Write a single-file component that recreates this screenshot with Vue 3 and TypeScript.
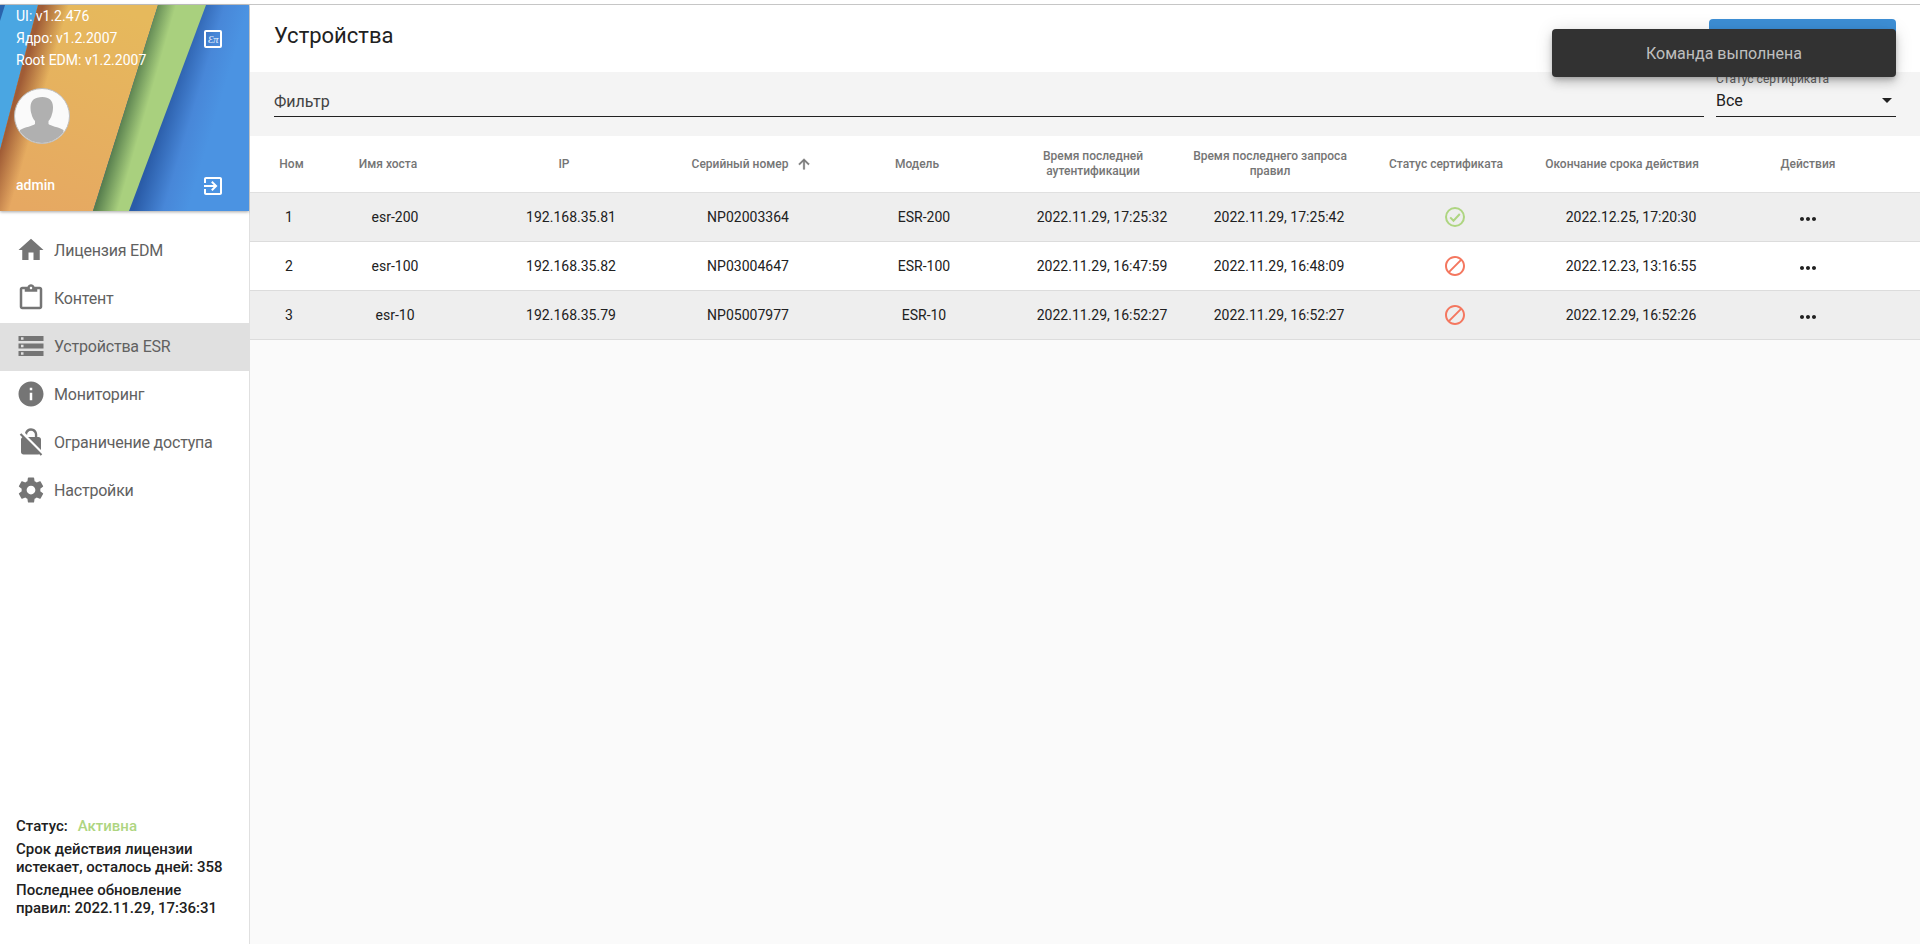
<script setup lang="ts">
interface MenuItem { label: string; path: string; active?: boolean }
interface Device { n: number; host: string; ip: string; serial: string; model: string; auth: string; rules: string; ok: boolean; end: string }

const menu: MenuItem[] = [
  { label: 'Лицензия EDM', path: 'M10 20v-6h4v6h5v-8h3L12 3 2 12h3v8z' },
  { label: 'Контент', path: 'M19 3h-4.18C14.4 1.84 13.3 1 12 1c-1.3 0-2.4.84-2.82 2H5c-1.1 0-2 .9-2 2v14c0 1.1.9 2 2 2h14c1.1 0 2-.9 2-2V5c0-1.1-.9-2-2-2zm-7 0c.55 0 1 .45 1 1s-.45 1-1 1-1-.45-1-1 .45-1 1-1zm7 16H5V5h2v2h10V5h2v14z' },
  { label: 'Устройства ESR', active: true, path: 'M2 20h20v-4H2v4zm2-3h2v2H4v-2zM2 4v4h20V4H2zm4 3H4V5h2v2zm-4 7h20v-4H2v4zm2-3h2v2H4v-2z' },
  { label: 'Мониторинг', path: 'M12 2C6.48 2 2 6.48 2 12s4.48 10 10 10 10-4.48 10-10S17.52 2 12 2zm1 15h-2v-6h2v6zm0-8h-2V7h2v2z' },
  { label: 'Ограничение доступа', path: 'M21 21.78L4.22 5 3 6.22l2.04 2.04C4.42 8.6 4 9.25 4 10v10c0 1.1.9 2 2 2h12c.23 0 .45-.05.66-.12L19.78 23 21 21.78zM8.9 6c0-1.71 1.39-3.1 3.1-3.1s3.1 1.39 3.1 3.1v2H9.66L20 18.34V10c0-1.1-.9-2-2-2h-1V6c0-2.76-2.24-5-5-5-2.32 0-4.26 1.59-4.82 3.74L8.9 6.46V6z' },
  { label: 'Настройки', path: 'M19.43 12.98c.04-.32.07-.64.07-.98s-.03-.66-.07-.98l2.11-1.65c.19-.15.24-.42.12-.64l-2-3.46c-.12-.22-.39-.3-.61-.22l-2.49 1c-.52-.4-1.08-.73-1.69-.98l-.38-2.65C14.46 2.18 14.25 2 14 2h-4c-.25 0-.46.18-.49.42l-.38 2.65c-.61.25-1.17.59-1.69.98l-2.49-1c-.23-.09-.49 0-.61.22l-2 3.46c-.13.22-.07.49.12.64l2.11 1.65c-.04.32-.07.65-.07.98s.03.66.07.98l-2.11 1.65c-.19.15-.24.42-.12.64l2 3.46c.12.22.39.3.61.22l2.49-1c.52.4 1.08.73 1.69.98l.38 2.65c.03.24.24.42.49.42h4c.25 0 .46-.18.49-.42l.38-2.65c.61-.25 1.17-.59 1.69-.98l2.49 1c.23.09.49 0 .61-.22l2-3.46c.12-.22.07-.49-.12-.64l-2.11-1.65zM12 15.5c-1.93 0-3.5-1.57-3.5-3.5s1.57-3.5 3.5-3.5 3.5 1.57 3.5 3.5-1.57 3.5-3.5 3.5z' }
]

const columns: { label: string; slot: number; arrow?: boolean }[] = [
  { label: 'Ном', slot: 0 },
  { label: 'Имя хоста', slot: 14 },
  { label: 'IP', slot: 12 },
  { label: 'Серийный номер', slot: 24, arrow: true },
  { label: 'Модель', slot: 12 },
  { label: 'Время последней аутентификации', slot: 18 },
  { label: 'Время последнего запроса правил', slot: 18 },
  { label: 'Статус сертификата', slot: 18 },
  { label: 'Окончание срока действия', slot: 18 },
  { label: 'Действия', slot: 0 }
]

const devices: Device[] = [
  { n: 1, host: 'esr-200', ip: '192.168.35.81', serial: 'NP02003364', model: 'ESR-200', auth: '2022.11.29, 17:25:32', rules: '2022.11.29, 17:25:42', ok: true, end: '2022.12.25, 17:20:30' },
  { n: 2, host: 'esr-100', ip: '192.168.35.82', serial: 'NP03004647', model: 'ESR-100', auth: '2022.11.29, 16:47:59', rules: '2022.11.29, 16:48:09', ok: false, end: '2022.12.23, 13:16:55' },
  { n: 3, host: 'esr-10', ip: '192.168.35.79', serial: 'NP05007977', model: 'ESR-10', auth: '2022.11.29, 16:52:27', rules: '2022.11.29, 16:52:27', ok: false, end: '2022.12.29, 16:52:26' }
]
</script>

<template>
  <div class="page">
    <aside class="sidebar">
      <header class="profile">
        <svg class="art" viewBox="0 0 249 206" preserveAspectRatio="none" aria-hidden="true">
          <defs>
            <linearGradient id="gBlue" gradientUnits="userSpaceOnUse" x1="165" y1="100" x2="215" y2="115">
              <stop offset="0" stop-color="#2a5ca8" />
              <stop offset="0.55" stop-color="#4887d8" />
              <stop offset="1" stop-color="#4b93e2" />
            </linearGradient>
            <linearGradient id="gGreen" gradientUnits="userSpaceOnUse" x1="125" y1="100" x2="146" y2="106">
              <stop offset="0" stop-color="#587f4e" />
              <stop offset="1" stop-color="#a9d07e" />
            </linearGradient>
            <linearGradient id="gOrange" gradientUnits="userSpaceOnUse" x1="14" y1="100" x2="38" y2="107">
              <stop offset="0" stop-color="#a05c36" />
              <stop offset="1" stop-color="#a05c36" stop-opacity="0" />
            </linearGradient>
            <linearGradient id="gOrange2" gradientUnits="userSpaceOnUse" x1="30" y1="206" x2="110" y2="0">
              <stop offset="0" stop-color="#e6a862" />
              <stop offset="1" stop-color="#e6b95c" />
            </linearGradient>
          </defs>
          <rect width="249" height="206" fill="url(#gBlue)" />
          <polygon points="0,0 38,0 0,145" fill="#4aa6e2" />
          <polygon points="0,0 5,0 0,16" fill="#2a63ac" />
          <polygon points="38,0 158,0 93,206 0,206 0,145" fill="url(#gOrange2)" />
          <polygon points="38,0 90,0 35,206 0,206 0,145" fill="url(#gOrange)" />
          <polygon points="158,0 206,0 129,206 93,206" fill="url(#gGreen)" />
        </svg>
        <div class="top-row">
          <div class="versions">
            <div>UI: v1.2.476</div>
            <div>Ядро: v1.2.2007</div>
            <div>Root EDM: v1.2.2007</div>
          </div>
          <span class="lang">Ɛπ</span>
        </div>
        <svg class="avatar" viewBox="0 0 56 56" aria-hidden="true">
          <defs><clipPath id="av"><circle cx="28" cy="28" r="27" /></clipPath></defs>
          <circle cx="28" cy="28" r="27.5" fill="#fafafa" stroke="#bdbdbd" />
          <path clip-path="url(#av)" d="M28.500 9c6.500 0 10.500 3.500 10.500 10 0 3-.3 5-1 7-.7 3-2 5.500-3.500 7v3c2 2 10 3 15 6V56H6V42c5-3 13-4 15-6v-3c-1.500-1.500-2.800-4-3.500-7-.7-2-1-4-1-7 0-6.500 4-10 12-10z" fill="#b0b0b0" />
        </svg>
        <div class="bottom-row">
          <span class="user">admin</span>
          <svg class="logout" viewBox="0 0 24 24" aria-hidden="true"><path fill="#fff" d="M10.09 15.59L11.5 17l5-5-5-5-1.41 1.41L12.67 11H3v2h9.67l-2.58 2.59zM19 3H5c-1.11 0-2 .9-2 2v4h2V5h14v14H5v-4H3v4c0 1.1.89 2 2 2h14c1.1 0 2-.9 2-2V5c0-1.1-.9-2-2-2z" /></svg>
        </div>
      </header>

      <nav class="menu">
        <a v-for="item in menu" :key="item.label" class="menu-item" :class="{ active: item.active }">
          <svg class="menu-icon" viewBox="0 0 24 24" aria-hidden="true"><path :d="item.path" /></svg>
          <span class="menu-label">{{ item.label }}</span>
        </a>
      </nav>

      <footer class="license">
        <div class="status"><span>Статус:</span><span class="active-text">Активна</span></div>
        <div class="para">Срок действия лицензии истекает, осталось дней: 358</div>
        <div class="para">Последнее обновление правил: 2022.11.29, 17:36:31</div>
      </footer>
    </aside>

    <main class="main">
      <div class="title-row">
        <h1>Устройства</h1>
        <button class="primary" type="button"></button>
      </div>

      <div class="filters">
        <div class="field filter-field"><span>Фильтр</span></div>
        <div class="select-field">
          <label>Статус сертификата</label>
          <div class="field select-value"><span>Все</span><i class="caret"></i></div>
        </div>
      </div>

      <div class="grid head">
        <div v-for="c in columns" :key="c.label" class="th" :class="{ sorted: c.arrow }">
          <span class="th-text">{{ c.label }}</span>
          <span v-if="c.slot" class="sort-slot" :style="{ width: c.slot + 'px' }">
            <svg v-if="c.arrow" viewBox="0 0 24 24" aria-hidden="true"><path fill="#757575" stroke="#757575" stroke-width="0.8" d="M4 12l1.410 1.410L11 7.830V20h2V7.830l5.580 5.590L20 12l-8-8-8 8z" /></svg>
          </span>
        </div>
      </div>

      <div v-for="d in devices" :key="d.n" class="grid row">
        <div>{{ d.n }}</div>
        <div>{{ d.host }}</div>
        <div class="nudge">{{ d.ip }}</div>
        <div>{{ d.serial }}</div>
        <div class="nudge">{{ d.model }}</div>
        <div>{{ d.auth }}</div>
        <div>{{ d.rules }}</div>
        <div class="icon-cell">
          <svg v-if="d.ok" class="cert" viewBox="0 0 24 24" aria-hidden="true">
            <circle cx="12" cy="12" r="9" fill="none" stroke="#aed581" stroke-width="2" />
            <path d="M7.200 12.400l3.300 3.300 6.300-6.700" fill="none" stroke="#aed581" stroke-width="2" />
          </svg>
          <svg v-else class="cert" viewBox="0 0 24 24" aria-hidden="true">
            <path fill="#f4775f" d="M12 2C6.480 2 2 6.480 2 12s4.480 10 10 10 10-4.480 10-10S17.520 2 12 2zM4 12c0-4.420 3.580-8 8-8 1.850 0 3.550.630 4.900 1.690L5.690 16.900C4.630 15.550 4 13.850 4 12zm8 8c-1.850 0-3.550-.630-4.900-1.690L18.310 7.100C19.370 8.450 20 10.150 20 12c0 4.420-3.580 8-8 8z" />
          </svg>
        </div>
        <div>{{ d.end }}</div>
        <div class="icon-cell">
          <svg class="more" viewBox="0 0 24 24" aria-hidden="true"><path fill="#212121" d="M6 10c-1.100 0-2 .9-2 2s.9 2 2 2 2-.9 2-2-.9-2-2-2zm12 0c-1.100 0-2 .9-2 2s.9 2 2 2 2-.9 2-2-.9-2-2-2zm-6 0c-1.100 0-2 .9-2 2s.9 2 2 2 2-.9 2-2-.9-2-2-2z" /></svg>
        </div>
      </div>

      <div class="toast">Команда выполнена</div>
    </main>
  </div>
</template>

<style>
html, body { margin: 0; height: 100%; overflow: hidden; background: #fff; }
</style>

<style scoped>
.page {
  display: flex;
  box-sizing: border-box;
  height: 100vh;
  margin-top: 4px;
  border-top: 1px solid #c6c6c6;
  font-family: Roboto, "Noto Sans", sans-serif;
  color: #212121;
}
.sidebar {
  width: 250px;
  flex: none;
  box-sizing: border-box;
  border-right: 1px solid #e0e0e0;
  background: #fff;
  display: flex;
  flex-direction: column;
  height: 939px;
}
.profile {
  position: relative;
  height: 206px;
  flex: none;
  box-sizing: border-box;
  padding: 0 24px 13px 16px;
  display: flex;
  flex-direction: column;
  color: #fff;
  font-size: 14px;
  box-shadow: 0 1px 3px rgba(0, 0, 0, 0.35);
}
.art {
  position: absolute;
  inset: 0;
  width: 100%;
  height: 100%;
}
.top-row, .avatar, .bottom-row { position: relative; }
.top-row { display: flex; justify-content: space-between; }
.versions { line-height: 22px; }
.lang {
  box-sizing: border-box;
  width: 18px;
  height: 18px;
  margin: 25px 3px 0 0;
  border: 2px solid #fff;
  border-radius: 2px;
  display: flex;
  align-items: center;
  justify-content: center;
  font: italic 11px/1 "Liberation Serif", "DejaVu Serif", serif;
  color: #e4eefa;
  letter-spacing: -0.5px;
}
.avatar { width: 56px; height: 56px; margin: 17px 0 0 -2px; flex: none; }
.bottom-row { margin-top: auto; display: flex; align-items: center; justify-content: space-between; }
.user { font-weight: 500; padding-bottom: 2px; }
.logout { width: 24px; height: 24px; display: block; }

.menu { margin-top: 16px; display: flex; flex-direction: column; }
.menu-item {
  height: 48px;
  display: flex;
  align-items: center;
  padding-left: 16px;
  gap: 8px;
  font-size: 16px;
  color: #616161;
}
.menu-item.active { background: #e0e0e0; }
.menu-icon { width: 30px; height: 30px; fill: #757575; flex: none; position: relative; top: -1px; }
.menu-label { padding-bottom: 2px; letter-spacing: -0.2px; }

.license {
  margin-top: auto;
  padding: 0 16px 22px;
  font-size: 15px;
  font-weight: 500;
  line-height: 18px;
  color: #212121;
}
.status { display: flex; gap: 10px; margin-bottom: 5px; }
.active-text { color: #aed581; }
.para { margin-bottom: 5px; }

.main {
  position: relative;
  flex: 1;
  min-width: 0;
  background: #fafafa;
  height: 939px;
}
.title-row {
  height: 67px;
  box-sizing: border-box;
  background: #fff;
  display: flex;
  justify-content: space-between;
  padding: 15px 24px 0 24px;
}
h1 { margin: 0; font-size: 22px; font-weight: 400; line-height: 32px; color: #212121; }
.primary {
  width: 187px;
  height: 36px;
  margin-top: -1px;
  border: 0;
  border-radius: 4px;
  background: #3d8fd6;
}
.filters {
  height: 64px;
  box-sizing: border-box;
  background: #f4f4f4;
  display: flex;
  gap: 12px;
  padding: 0 24px 19px;
  align-items: flex-end;
}
.field {
  height: 32px;
  box-sizing: border-box;
  border-bottom: 1.500px solid #212121;
  font-size: 16px;
  display: flex;
  align-items: center;
}
.filter-field { flex: 1; color: #424242; padding-top: 2px; }
.select-field { width: 180px; flex: none; }
.select-field label { display: block; font-size: 12px; line-height: 12px; color: #616161; }
.select-value { justify-content: space-between; padding-right: 4px; }
.caret {
  width: 0;
  height: 0;
  border-left: 5px solid transparent;
  border-right: 5px solid transparent;
  border-top: 5px solid #212121;
}

.grid {
  display: grid;
  grid-template-columns: 78px 134px 216px 140px 210px 148px 206px 146px 206px 148px 1fr;
  text-align: center;
  align-items: center;
}
.head { height: 57px; background: #fff; border-bottom: 1px solid #e0e0e0; box-sizing: border-box; }
.th {
  display: flex;
  align-items: center;
  justify-content: center;
  font-size: 12px;
  font-weight: 500;
  line-height: 15px;
  color: #757575;
}
.th:first-child { padding-left: 5px; }
.th.sorted { padding-left: 8px; }
.sort-slot { flex: none; display: flex; justify-content: flex-end; }
.sort-slot svg { width: 16px; height: 16px; display: block; }
.row {
  height: 49px;
  box-sizing: border-box;
  background: #fff;
  border-bottom: 1px solid #dcdcdc;
  font-size: 14px;
  color: #212121;
}
.row:nth-child(4), .row:nth-child(6) { background: #eee; }
.nudge { padding-left: 2px; }
.icon-cell { display: flex; justify-content: center; }
.cert { width: 24px; height: 24px; display: block; }
.more { width: 24px; height: 24px; display: block; position: relative; top: 2px; }

.toast {
  position: absolute;
  top: 24px;
  right: 24px;
  width: 344px;
  height: 48px;
  box-sizing: border-box;
  border-radius: 4px;
  background: #323232;
  color: rgba(255, 255, 255, 0.7);
  font-size: 16px;
  display: flex;
  align-items: center;
  justify-content: center;
  box-shadow: 0 3px 5px -1px rgba(0, 0, 0, 0.2), 0 6px 10px 0 rgba(0, 0, 0, 0.14), 0 1px 18px 0 rgba(0, 0, 0, 0.12);
}
</style>
